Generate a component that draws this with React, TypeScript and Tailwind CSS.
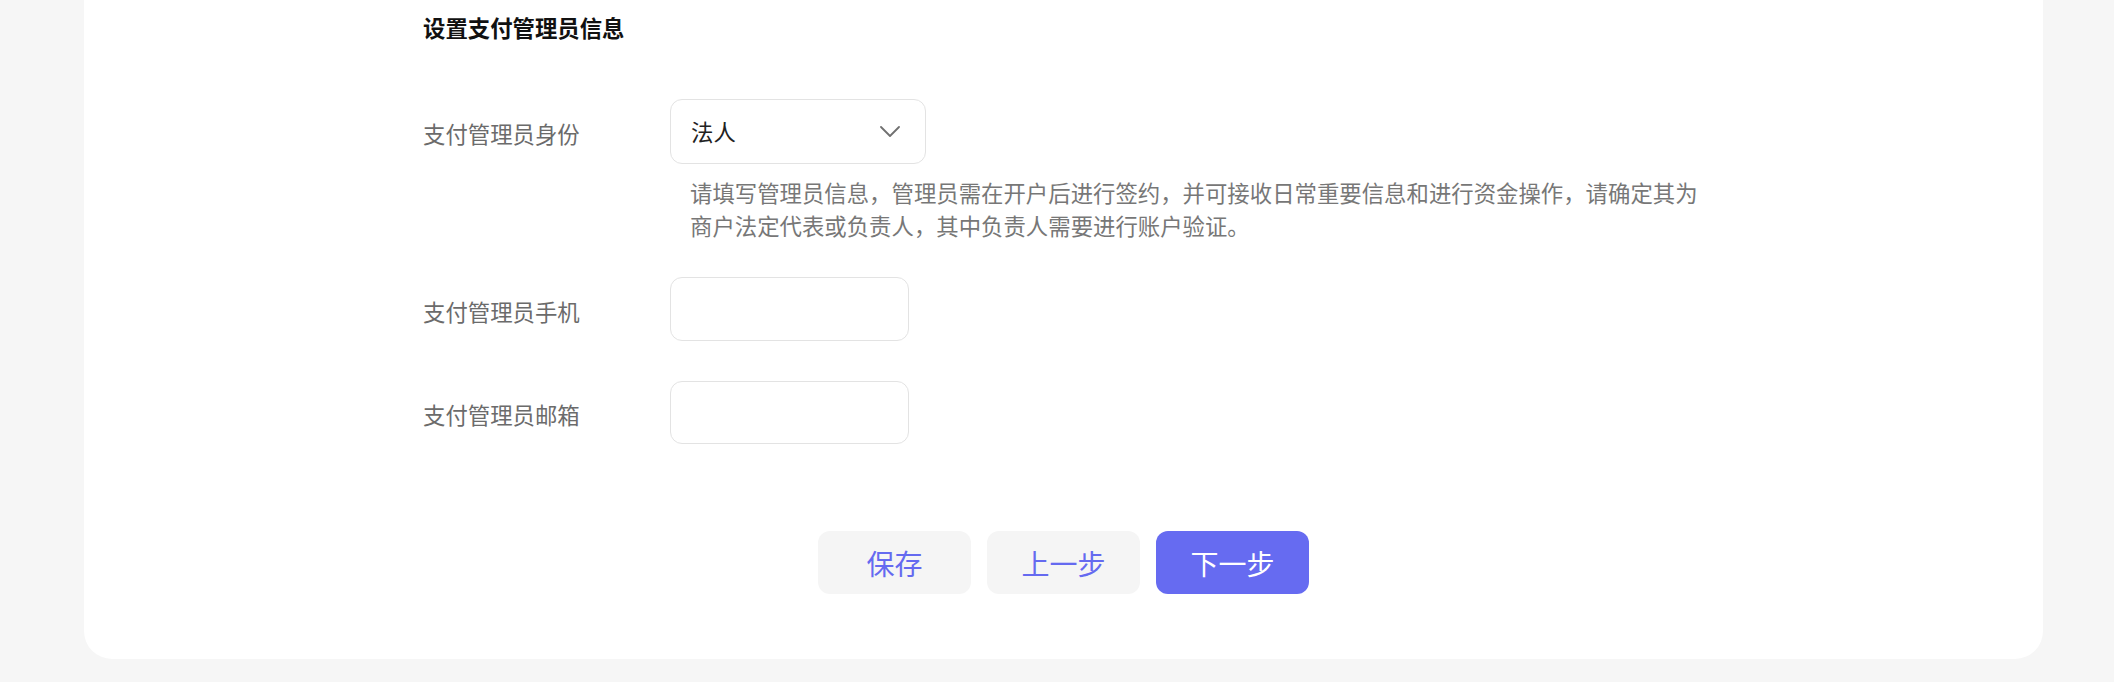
import React from "react";

const font = { fontFamily: '"Noto Sans CJK SC", "Noto Sans", sans-serif' };

function Label({ children, pt }: { children: React.ReactNode; pt: string }) {
  return (
    <div className={`w-[247px] shrink-0 flex items-center text-[22.4px] leading-[32px] text-[#6b6b6b] ${pt}`}>
      {children}
    </div>
  );
}

export default function App() {
  return (
    <div className="w-[2114px] h-[682px] bg-[#f6f6f6] overflow-hidden" style={font}>
      <div className="ml-[84px] w-[1959px] bg-white rounded-b-[28px] pt-[12px] pb-[65px]">
        <div className="pl-[339px]">
          <div className="h-[32px] flex items-center text-[22.4px] font-bold text-[#111111]">
            设置支付管理员信息
          </div>

          <div className="mt-[55px] flex h-[65px]">
            <Label pt="pt-[3px]">支付管理员身份</Label>
            <div className="w-[256px] h-[65px] border border-[#e3e3e3] rounded-[12px] flex items-center justify-between pl-[20px] pr-[25px]">
              <span className="text-[22.4px] text-[#222222]">法人</span>
              <svg width="20" height="11" viewBox="0 0 20 11" fill="none">
                <polyline points="1,1 10,10 19,1" stroke="#707070" strokeWidth="1.8" strokeLinecap="round" strokeLinejoin="round" />
              </svg>
            </div>
          </div>

          <div className="mt-[12px] flex">
            <div className="w-[267px] shrink-0" />
            <p className="w-[1020px] text-[22.4px] leading-[33px] text-[#777777]">
              请填写管理员信息，管理员需在开户后进行签约，并可接收日常重要信息和进行资金操作，请确定其为商户法定代表或负责人，其中负责人需要进行账户验证。
            </p>
          </div>

          <div className="mt-[35px] flex h-[64px]">
            <Label pt="pt-[4px]">支付管理员手机</Label>
            <input className="w-[239px] h-[64px] border border-[#e3e3e3] rounded-[12px] outline-none px-[20px] text-[22px]" />
          </div>

          <div className="mt-[40px] flex h-[63px]">
            <Label pt="pt-[3px]">支付管理员邮箱</Label>
            <input className="w-[239px] h-[63px] border border-[#e3e3e3] rounded-[12px] outline-none px-[20px] text-[22px]" />
          </div>
        </div>

        <div className="mt-[87px] flex justify-center gap-4">
          <button className="w-[153px] h-[63px] rounded-[12px] bg-[#f5f5f5] text-[#656af0] text-[28px]">保存</button>
          <button className="w-[153px] h-[63px] rounded-[12px] bg-[#f5f5f5] text-[#656af0] text-[28px]">上一步</button>
          <button className="w-[153px] h-[63px] rounded-[12px] bg-[#666bf1] text-white text-[28px]">下一步</button>
        </div>
      </div>
    </div>
  );
}
